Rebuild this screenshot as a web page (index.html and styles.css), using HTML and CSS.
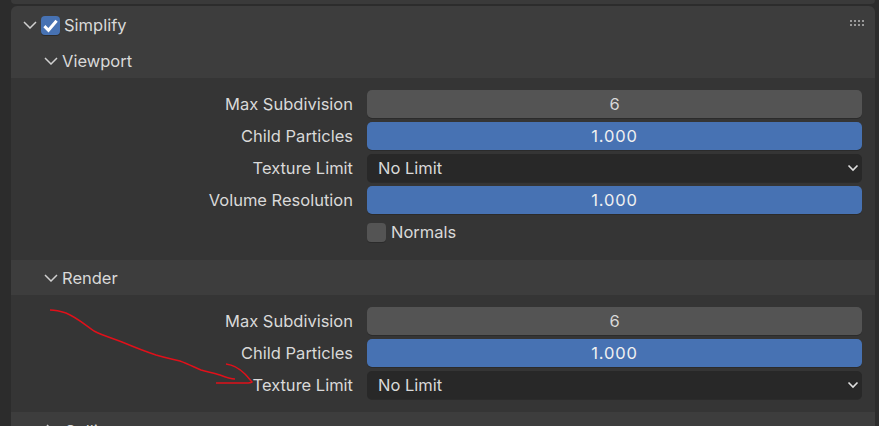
FILE: index.html
```html
<!DOCTYPE html>
<html lang="en">
<head>
<meta charset="utf-8">
<title>Simplify</title>
<link rel="stylesheet" href="styles.css">
</head>
<body>
<div class="editor">
  <div class="prev-panel"></div>
  <section class="panel">
    <header class="panel-head">
      <svg class="chev" viewBox="0 0 14 8"><path d="M1 1l6 6 6-6"/></svg>
      <span class="check on"><svg viewBox="0 0 14 14"><path d="M2.5 7.5l3 3 6-7"/></svg></span>
      <span class="title">Simplify</span>
      <svg class="grip" viewBox="0 0 15 7"><path d="M0 0h2v2H0zM4 0h2v2H4zM8 0h2v2H8zM12 0h2v2h-2zM0 4h2v2H0zM4 4h2v2H4zM8 4h2v2H8zM12 4h2v2h-2z"/></svg>
    </header>
    <header class="sub-head first">
      <svg class="chev" viewBox="0 0 14 8"><path d="M1 1l6 6 6-6"/></svg>
      <span class="title">Viewport</span>
    </header>
    <div class="sub-body viewport">
      <div class="row"><label>Max Subdivision</label><div class="field num">6</div></div>
      <div class="row"><label>Child Particles</label><div class="field blue">1.000</div></div>
      <div class="row"><label>Texture Limit</label><div class="field select"><span>No Limit</span><svg class="select-chev" viewBox="0 0 12 8"><path d="M1.5 1.5L6 6l4.5-4.5"/></svg></div></div>
      <div class="row"><label>Volume Resolution</label><div class="field blue">1.000</div></div>
      <div class="row"><label></label><div class="opt"><span class="check"></span><span>Normals</span></div></div>
    </div>
    <header class="sub-head">
      <svg class="chev" viewBox="0 0 14 8"><path d="M1 1l6 6 6-6"/></svg>
      <span class="title">Render</span>
    </header>
    <div class="sub-body render">
      <div class="row"><label>Max Subdivision</label><div class="field num">6</div></div>
      <div class="row"><label>Child Particles</label><div class="field blue">1.000</div></div>
      <div class="row"><label>Texture Limit</label><div class="field select"><span>No Limit</span><svg class="select-chev" viewBox="0 0 12 8"><path d="M1.5 1.5L6 6l4.5-4.5"/></svg></div></div>
    </div>
    <header class="sub-head closed">
      <svg class="chev-right" viewBox="0 0 8 14"><path d="M1 1l6 6-6 6"/></svg>
      <span class="title">Culling</span>
    </header>
  </section>
  <svg class="scribble" viewBox="0 0 879 426">
    <path d="M50 310C56 310 60 311 66 313C76 317 84 324 94 331C104 336 112 338 122 342C134 347 144 351 156 355C166 358 172 359 180 361C188 364 194 367 201 370C208 372 214 373 220 375C225 377 230 379 235 379"/>
    <path d="M226 364C234 365 240 369 245 374C248 377 250 380 252 382C251 383 249 383 246 383L216 383"/>
  </svg>
</div>
</body>
</html>
```
FILE: styles.css
```css
* { box-sizing: border-box; }
html, body { margin: 0; height: 100%; }
body { background: #282828; font-family: Inter, "Liberation Sans", sans-serif; font-size: 16.5px; color: #d9d9d9; overflow: hidden; }
.editor { position: relative; width: 879px; height: 426px; overflow: hidden; padding: 0 4px 0 11px; background: #2c2c2c; }
.prev-panel { height: 4px; background: #3a3a3a; border-radius: 0 0 5px 5px; margin-bottom: 2px; }
.panel { background: #3d3d3d; border-radius: 6px 6px 0 0; height: 500px; }
.panel-head { display: flex; align-items: center; height: 38px; padding: 0 7px 0 12px; }
.sub-head { display: flex; align-items: center; height: 35px; padding: 0 0 0 33px; background: #3d3d3d; }
.sub-head.first { height: 34px; }
.sub-head.closed { padding: 2px 0 0 35px; }
.chev, .chev-right { fill: none; stroke: #d0d0d0; stroke-width: 1.5; flex: none; }
.chev { width: 14px; height: 8px; }
.chev-right { width: 8px; height: 14px; }
.sub-head .title { margin-left: 4px; }
.sub-head.closed .title { margin-left: 10px; }
.panel-head .title { margin-left: 4px; }
.panel-head .check { margin-left: 4px; }
.check { width: 19px; height: 19px; flex: none; border-radius: 4px; background: #545454; box-shadow: 0 1px 0 #2b2b2b; display: block; }
.check.on { background: #4772b3; }
.check svg { display: block; width: 19px; height: 19px; fill: none; stroke: #fff; stroke-width: 2.2; }
.grip { width: 15px; height: 7px; margin: -3px 3px 0 auto; fill: #9a9a9a; }
.sub-body { background: #353535; display: flex; flex-direction: column; gap: 6px; padding: 13px 13px 0 0; }
.viewport { height: 182px; }
.render { height: 117px; }
.row { display: flex; align-items: center; height: 26px; gap: 14px; }
.row label { width: 342px; text-align: right; flex: none; }
.field { flex: 1; height: 28px; border-radius: 5px; display: flex; align-items: center; justify-content: center; box-shadow: 0 1px 0 #2b2b2b; }
.num { background: #545454; }
.blue { background: #4772b3; color: #f0f0f0; letter-spacing: 0.8px; }
.select { background: #282828; justify-content: space-between; padding: 0 3px 0 11px; }
.select-chev { width: 12px; height: 8px; fill: none; stroke: #e0e0e0; stroke-width: 1.6; }
.opt { display: flex; align-items: center; gap: 5px; }
.scribble { position: absolute; left: 0; top: 0; width: 879px; height: 426px; fill: none; stroke: #e0101a; stroke-width: 1.5; pointer-events: none; }
```
